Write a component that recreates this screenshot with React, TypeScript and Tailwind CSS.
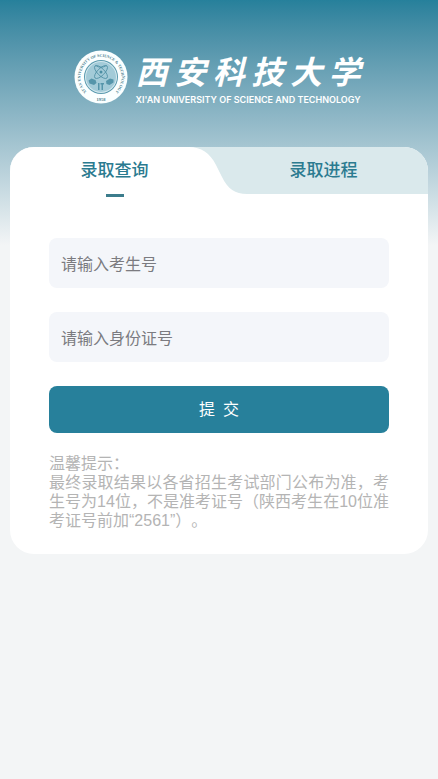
import { useState } from "react";

const TITLE = ["西", "安", "科", "技", "大", "学"];

function Seal() {
  return (
    <svg viewBox="0 0 108 108" className="size-[54px] shrink-0" role="img" aria-label="校徽">
      <defs>
        <path id="seal-ring" d="M 26.5 85 A 41 41 0 1 1 81.5 85" />
      </defs>
      <circle cx="54" cy="54" r="53" fill="#fbffff" />
      <circle cx="54" cy="54" r="34" fill="#5a9aae" />
      <circle cx="54" cy="54" r="32" fill="#d5e9ef" />
      <circle cx="54" cy="54" r="30" fill="#a3cbd8" />
      <text className="font-['Liberation_Serif',serif] font-bold" fontSize="8" fill="#4d7f90">
        <textPath href="#seal-ring" startOffset="50%" textAnchor="middle">
          XI'AN UNIVERSITY OF SCIENCE &amp; TECHNOLOGY
        </textPath>
      </text>
      <text x="54" y="101" textAnchor="middle" className="font-['Liberation_Serif',serif] font-bold" fontSize="9" fill="#4d7f90">
        1958
      </text>
      <g fill="none" stroke="#4b8ea3" strokeWidth="1.6">
        <ellipse cx="54" cy="44" rx="17" ry="7" transform="rotate(45 54 44)" />
        <ellipse cx="54" cy="44" rx="17" ry="7" transform="rotate(-45 54 44)" />
        <path d="M43 31 Q54 38 65 31" />
      </g>
      <circle cx="54" cy="44" r="3" fill="#4b8ea3" />
      <g fill="#5595aa">
        <path d="M29 61 l6 -4 8 3 2 6 -5 4 -9 -3z" />
        <path d="M79 59 l-7 -2 -8 5 1 6 6 2 8 -5z" />
        <path d="M48 66 h3 v14 h-3z M53 66 h7 v3 h-2 v11 h-3 v-11 h-2z" />
      </g>
    </svg>
  );
}

function Brand() {
  return (
    <header className="flex justify-center gap-2 pt-[50px]">
      <Seal />
      <div className="flex w-[229px] flex-col text-white">
        <h1 className="flex justify-between pr-1 font-['Noto_Sans_CJK_SC',sans-serif] text-[32px] leading-[41px] font-bold italic">
          {TITLE.map((c) => (
            <span key={c}>{c}</span>
          ))}
        </h1>
        <p className="font-[Inter,'Liberation_Sans',sans-serif] text-[9px] leading-[18px] font-semibold whitespace-nowrap">
          XI'AN UNIVERSITY OF SCIENCE AND TECHNOLOGY
        </p>
      </div>
    </header>
  );
}

function Field({ name, label }: { name: string; label: string }) {
  return (
    <input
      name={name}
      type="text"
      aria-label={label}
      placeholder={label}
      className="block h-[50px] w-full rounded-lg bg-[#f4f6fa] px-3 pt-1 text-base text-gray-800 outline-none placeholder:text-[#7b7b80]"
    />
  );
}

export default function App() {
  const [tab, setTab] = useState("query");
  return (
    <div className="min-h-screen bg-[#f3f5f6] font-['Liberation_Sans','Noto_Sans_CJK_SC',sans-serif]">
      <div className="bg-linear-to-b from-[#26809b] to-[#f3f5f6] bg-[length:100%_245px] bg-no-repeat">
        <Brand />
        <main className="mx-[10px] mt-[38px] overflow-hidden rounded-3xl bg-white">
          <div role="tablist" className="grid h-[47px] grid-cols-2 bg-[#dae9ec] text-[17px] font-medium text-[#2b7b90]">
            <button
              type="button"
              role="tab"
              aria-selected={tab === "query"}
              onClick={() => setTab("query")}
              className="relative"
            >
              <span className="absolute inset-y-0 right-[29px] left-0 bg-white" />
              <svg viewBox="0 0 60 47" className="absolute top-0 -right-[30px] h-[47px] w-[60px]" aria-hidden="true">
                <path d="M0 0 C12 0 21 6 27 18 L33 30 C39 42 46 47 58 47 H0 Z" fill="#fff" />
              </svg>
              <span className="relative">录取查询</span>
              <span className="absolute top-full left-1/2 h-[3px] w-[18px] -translate-x-1/2 bg-[#3c7c8c]" />
            </button>
            <button
              type="button"
              role="tab"
              aria-selected={tab === "progress"}
              onClick={() => setTab("progress")}
            >
              录取进程
            </button>
          </div>
          <form className="px-[39px] pt-11 pb-6" onSubmit={(e) => e.preventDefault()}>
            <div className="flex flex-col gap-6">
              <Field name="candidate" label="请输入考生号" />
              <Field name="identity" label="请输入身份证号" />
              <button type="submit" className="h-[47px] rounded-lg bg-[#27809b] text-base text-white">
                提&ensp;交
              </button>
            </div>
            <div className="mt-[21px] text-justify text-base leading-[19px] text-[#b4b4b4] [font-feature-settings:'chws'_0,'kern'_0] [font-kerning:none] [text-spacing-trim:space-all]">
              <p>温馨提示：</p>
              <p>最终录取结果以各省招生考试部门公布为准，考生号为14位，不是准考证号（陕西考生在10位准考证号前加“2561”）。</p>
            </div>
          </form>
        </main>
      </div>
    </div>
  );
}
